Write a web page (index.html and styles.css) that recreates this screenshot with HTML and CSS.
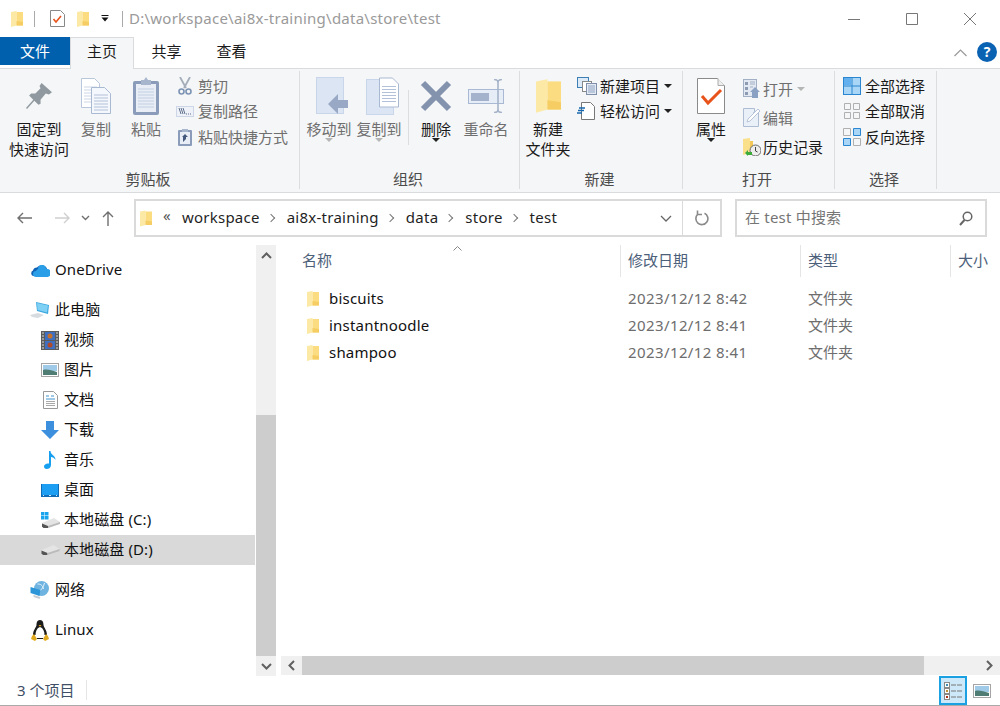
FILE: index.html
```html
<!DOCTYPE html>
<html lang="zh-CN">
<head>
    <meta charset="UTF-8">
    <title>test</title>
    <link rel="stylesheet" href="styles.css">
</head>
<body>
<svg class="defs" width="0" height="0">
    <symbol id="folder" viewBox="0 0 12 16">
        <path d="M0 1 5.500 0v14.500L0 16z" fill="#fde9a6"/>
        <path d="M5.500 1H12v13.500H5.500z" fill="#fbdc80"/>
        <path d="M5.500 10 12 11v3.500H5.500z" fill="#f6cd62"/>
    </symbol>
    <symbol id="docs" viewBox="0 0 30 36">
        <path d="M.5.500h13l5 5v24H.5z" fill="#fff" stroke="#b9c7dc"/>
        <path d="M3 9h13M3 12h13M3 15h13M3 18h8M3 21h8M3 24h8" stroke="#ccd6e6"/>
        <path d="M10.500 9.500h13l6 6v20h-19z" fill="#f4f7fb" stroke="#a9b9d2"/>
        <path d="M13 17h14M13 20h14M13 23h14M13 26h14M13 29h14M13 32h14" stroke="#b3c1d8"/>
    </symbol>
    <symbol id="doc-lines" viewBox="0 0 20 30">
        <path d="M.5.500h13l6 6v23H.5z" fill="#fff" stroke="#a9b9d2"/>
        <path d="M3 9h14M3 12h14M3 15h14M3 18h14M3 21h14M3 24h14" stroke="#b3c1d8"/>
    </symbol>
    <symbol id="drive" viewBox="0 0 18 10">
        <path d="M0 5 12 0l6 4-1 1.500-11 4.500H1z" fill="#e4e4e4"/>
        <path d="M0 5.500 6 8v2H1.500L0 8.500z" fill="#555"/>
        <path d="M6 8 18 4v2L6 10z" fill="#bbb"/>
    </symbol>
</svg>

<div class="window">
    <header class="titlebar">
        <svg class="qa-folder" width="12" height="16"><use href="#folder"/></svg>
        <span class="qa-sep"></span>
        <svg class="qa-check" width="15" height="17" viewBox="0 0 15 17">
            <path d="M.5.500h10l4 4v12H.5z" fill="#fff" stroke="#888"/>
            <path d="M3.500 9l2.500 3 5-6" fill="none" stroke="#e8531c" stroke-width="1.600"/>
        </svg>
        <svg class="qa-folder2" width="12" height="16"><use href="#folder"/></svg>
        <svg class="qa-drop" width="8" height="7" viewBox="0 0 8 7">
            <path d="M.5.500h7" stroke="#111"/>
            <path d="M.5 2.500h7L4 6.500z" fill="#111"/>
        </svg>
        <span class="qa-sep qa-sep-2"></span>
        <span class="title-text">D:\workspace\ai8x-training\data\store\test</span>
        <div class="win-btns">
            <svg width="12" height="12" viewBox="0 0 12 12"><path d="M0 6.500h12" stroke="#777"/></svg>
            <svg width="12" height="12" viewBox="0 0 12 12"><path d="M.5.500h11v11H.5z" fill="none" stroke="#777"/></svg>
            <svg width="12" height="12" viewBox="0 0 12 12"><path d="M0 0l12 12M12 0 0 12" stroke="#777"/></svg>
        </div>
    </header>

    <nav class="tabs">
        <span class="tab tab-file">文件</span>
        <span class="tab tab-on">主页</span>
        <span class="tab">共享</span>
        <span class="tab">查看</span>
        <svg class="tabs-chevron" width="13" height="8" viewBox="0 0 13 8"><path d="M.5 7 6.500 1l6 6" fill="none" stroke="#999" stroke-width="1.200"/></svg>
        <span class="help">?</span>
    </nav>

    <section class="ribbon">
        <div class="group group-clip">
            <div class="group-body">
                <div class="big w70">
                    <div class="big-icon">
                        <svg width="26" height="26" viewBox="0 0 25 25"><path d="M15 0 25 9l-3 2-3-1-5 6v4l-2 1-4-4-7 8-1-1 7-8-4-4 2-2h4l5-5-1-2z" fill="#8f999f"/></svg>
                    </div>
                    <span>固定到</span><span>快速访问</span>
                </div>
                <div class="big w44 off">
                    <div class="big-icon"><svg width="30" height="36"><use href="#docs"/></svg></div>
                    <span>复制</span>
                </div>
                <div class="big w44 off ml6">
                    <div class="big-icon">
                        <svg width="26" height="38" viewBox="0 0 26 38">
                            <rect x="0" y="4" width="26" height="34" rx="2" fill="#8b9cbb"/>
                            <rect x="3" y="7" width="20" height="28" fill="#e8edf6"/>
                            <path d="M5 12h16M5 15h16M5 18h16M5 21h16M5 24h16M5 27h16M5 30h16" stroke="#c3cfe2"/>
                            <path d="M8 3h3l2-3 2 3h3v5H8z" fill="#a7b5cd"/>
                        </svg>
                    </div>
                    <span>粘贴</span>
                </div>
                <div class="small-col ml8 off">
                    <div class="small"><span class="slot">
                        <svg class="nudge" width="14" height="18" viewBox="0 0 14 18">
                            <path d="M2 0l6 11M12 0 6 11" stroke="#a4aebb" stroke-width="1.800" fill="none"/>
                            <circle cx="3.500" cy="14.500" r="2.500" fill="none" stroke="#7d93b4" stroke-width="1.600"/>
                            <circle cx="10.500" cy="14.500" r="2.500" fill="none" stroke="#7d93b4" stroke-width="1.600"/>
                        </svg>
                    </span>剪切</div>
                    <div class="small"><span class="slot">
                        <svg width="18" height="11" viewBox="0 0 18 11">
                            <rect width="18" height="11" fill="#ccd6e6"/>
                            <rect x="1" y="1" width="16" height="9" fill="#eef2f8"/>
                            <path d="M3 2l2 6M5 2l2 6M7 2l2 6" stroke="#5f6f8c" fill="none"/>
                            <path d="M10 8h1M12 8h1M14 8h1" stroke="#5f6f8c"/>
                        </svg>
                    </span>复制路径</div>
                    <div class="small"><span class="slot">
                        <svg class="nudge" width="14" height="18" viewBox="0 0 14 18">
                            <rect y="2" width="14" height="16" rx="1" fill="#8b9cbb"/>
                            <rect x="2" y="4" width="10" height="12" fill="#e8edf6"/>
                            <path d="M4 1h6v3H4z" fill="#a7b5cd"/>
                            <path d="M5 14V9h-1l3-3 3 3H8v2z" fill="#44597c"/>
                        </svg>
                    </span>粘贴快捷方式</div>
                </div>
            </div>
            <div class="group-label">剪贴板</div>
        </div>

        <div class="group group-org">
            <div class="group-body">
                <div class="big w50 off">
                    <div class="big-icon big-icon-r">
                        <svg width="33" height="38" viewBox="0 0 33 38">
                            <rect x=".5" y=".5" width="27" height="36" fill="#dce5f3" stroke="#c9d6ea"/>
                            <path d="M12 27 22 17v6h10v8H22v6z" fill="#99a9c5"/>
                        </svg>
                    </div>
                    <span>移动到</span><i class="caret caret-off"></i>
                </div>
                <div class="big w50 off">
                    <div class="big-icon big-icon-r">
                        <svg width="33" height="38" viewBox="0 0 33 38">
                            <rect x=".5" y="2.500" width="27" height="35" fill="#dce5f3" stroke="#c9d6ea"/>
                            <use href="#doc-lines" x="13" y="0" width="20" height="31"/>
                        </svg>
                    </div>
                    <span>复制到</span><i class="caret caret-off"></i>
                </div>
                <span class="vsep"></span>
                <div class="big w50">
                    <div class="big-icon">
                        <svg width="32" height="32" viewBox="0 0 32 32"><path d="M3 3l26 26M29 3 3 29" stroke="#8493ad" stroke-width="6"/></svg>
                    </div>
                    <span>删除</span><i class="caret"></i>
                </div>
                <div class="big w50 off">
                    <div class="big-icon">
                        <svg width="36" height="34" viewBox="0 0 36 34">
                            <rect x=".5" y="10.500" width="35" height="14" fill="#e6edf7" stroke="#a9b8d3"/>
                            <rect x="3" y="14" width="18" height="8" fill="#a4b2cb"/>
                            <path d="M26 .5c3 0 4 1 4 3v27c0 2-1 3-4 3M34 .5c-3 0-4 1-4 3v27c0 2 1 3 4 3" fill="none" stroke="#a5b3c9" stroke-width="1.600"/>
                        </svg>
                    </div>
                    <span>重命名</span>
                </div>
            </div>
            <div class="group-label">组织</div>
        </div>

        <div class="group group-new">
            <div class="group-body">
                <div class="big w48">
                    <div class="big-icon"><svg width="25" height="34"><use href="#folder"/></svg></div>
                    <span>新建</span><span>文件夹</span>
                </div>
                <div class="small-col ml5">
                    <div class="small"><span class="slot slot-23">
                        <svg width="20" height="18" viewBox="0 0 20 18">
                            <rect x=".5" y=".5" width="11" height="10" fill="#dbeaf6" stroke="#3d7fb5"/>
                            <rect x="5.500" y="4.500" width="9" height="10" fill="#fff" stroke="#888"/>
                            <rect x="9.500" y="6.500" width="10" height="11" fill="#e4ebf5" stroke="#7f8fa9"/>
                            <path d="M11 9h7M11 11h7M11 13h7M11 15h7" stroke="#8fa3c2"/>
                        </svg>
                    </span>新建项目<i class="caret caret-side"></i></div>
                    <div class="small"><span class="slot slot-23">
                        <svg width="18" height="18" viewBox="0 0 18 18">
                            <path d="M4.500.500h9l4 4v13h-13z" fill="#fff" stroke="#777"/>
                            <path d="M2 6h6M1 8.500h6M0 11h5" stroke="#1668b0" stroke-width="1.300"/>
                        </svg>
                    </span>轻松访问<i class="caret caret-side"></i></div>
                </div>
            </div>
            <div class="group-label">新建</div>
        </div>

        <div class="group group-open">
            <div class="group-body">
                <div class="big w48">
                    <div class="big-icon">
                        <svg width="28" height="36" viewBox="0 0 28 36">
                            <path d="M.5.500h20l7 7v28H.5z" fill="#fff" stroke="#8a8a8a"/>
                            <path d="M21 .5v7h6.500" fill="#eee" stroke="#aaa"/>
                            <path d="M5 18l6 7L24 12" fill="none" stroke="#e8531c" stroke-width="3"/>
                        </svg>
                    </div>
                    <span>属性</span><i class="caret"></i>
                </div>
                <div class="small-col tall ml8">
                    <div class="small off"><span class="slot slot-20">
                        <svg width="17" height="19" viewBox="0 0 17 19">
                            <rect x=".5" y=".5" width="13" height="17" fill="#e3e9f2" stroke="#a2afc4"/>
                            <path d="M2 3h3v3H2zM2 8h3v3H2zM2 13h3v3H2z" fill="#8c9ab2"/>
                            <path d="M7 3h5M7 5h5M7 8h3" stroke="#a2afc4"/>
                            <path d="M7 13l5-5 5 5h-2v6H9v-6z" fill="#8aa1c4"/>
                        </svg>
                    </span>打开<i class="caret caret-off caret-side"></i></div>
                    <div class="small off"><span class="slot slot-20">
                        <svg width="17" height="19" viewBox="0 0 17 19">
                            <path d="M.5.500h11v3l-1 1 5 -3v17H.5z" fill="#eaf0f8" stroke="#aebdd4"/>
                            <path d="M4 14l1-3L15 1l2 2L7 13z" fill="#fff" stroke="#b6c3d8"/>
                        </svg>
                    </span>编辑</div>
                    <div class="small"><span class="slot slot-20">
                        <svg width="18" height="18" viewBox="0 0 18 18">
                            <path d="M0 1l7-1v15l-7 2z" fill="#fbe08b"/>
                            <path d="M7 3h3v12H7z" fill="#f4c95a"/>
                            <circle cx="12.500" cy="12.500" r="5.500" fill="#eee" stroke="#666"/>
                            <path d="M12.500 9v4l2 1" fill="none" stroke="#444"/>
                            <path d="M2 15l3-3v2h4v3H5v1z" fill="#3cab3a"/>
                        </svg>
                    </span>历史记录</div>
                </div>
            </div>
            <div class="group-label">打开</div>
        </div>

        <div class="group group-select">
            <div class="group-body">
                <div class="small-col">
                    <div class="small"><span class="slot">
                        <svg width="18" height="18" viewBox="0 0 18 18">
                            <rect x=".5" y=".5" width="17" height="17" fill="#a9d6f7" stroke="#2a86d0"/>
                            <path d="M9 0v18M0 9h18" stroke="#2a86d0"/>
                            <path d="M1 1h7v7H1z" fill="#62b1ee"/>
                        </svg>
                    </span>全部选择</div>
                    <div class="small"><span class="slot">
                        <svg class="nudge-r" width="16" height="16" viewBox="0 0 16 16">
                            <path d="M.5.500h6v6h-6zM9.500.500h6v6h-6zM.5 9.500h6v6h-6zM9.500 9.500h6v6h-6z" fill="none" stroke="#b0b0b0"/>
                        </svg>
                    </span>全部取消</div>
                    <div class="small"><span class="slot">
                        <svg width="18" height="18" viewBox="0 0 18 18">
                            <path d="M.5.500h7v7h-7zM10.500 10.500h7v7h-7z" fill="none" stroke="#b0b0b0"/>
                            <path d="M10.500.500h7v7h-7zM.5 10.500h7v7h-7z" fill="#a9d6f7" stroke="#2a86d0"/>
                        </svg>
                    </span>反向选择</div>
                </div>
            </div>
            <div class="group-label">选择</div>
        </div>
    </section>

    <section class="addressbar">
        <div class="nav-arrows">
            <svg width="15" height="12" viewBox="0 0 15 12"><path d="M15 6H1M6 1 1 6l5 5" fill="none" stroke="#6f6f6f" stroke-width="1.400"/></svg>
            <svg class="arrow-forward" width="15" height="12" viewBox="0 0 15 12"><path d="M0 6h14M9 1l5 5-5 5" fill="none" stroke="#cfcfcf" stroke-width="1.400"/></svg>
            <svg class="arrow-down" width="9" height="6" viewBox="0 0 9 6"><path d="M1 1l3.500 3.500L8 1" fill="none" stroke="#6f6f6f" stroke-width="1.400"/></svg>
            <svg class="arrow-up" width="12" height="15" viewBox="0 0 12 15"><path d="M6 15V1M1 6l5-5 5 5" fill="none" stroke="#6f6f6f" stroke-width="1.400"/></svg>
        </div>
        <div class="pathbox">
            <svg class="path-folder" width="12" height="17"><use href="#folder"/></svg>
            <span class="path-more">«</span>
            <span>workspace</span><i class="crumb"></i>
            <span>ai8x-training</span><i class="crumb"></i>
            <span>data</span><i class="crumb"></i>
            <span>store</span><i class="crumb"></i>
            <span>test</span>
            <svg class="path-drop" width="12" height="7" viewBox="0 0 12 7"><path d="M1 1l5 5 5-5" fill="none" stroke="#666" stroke-width="1.300"/></svg>
            <div class="path-refresh">
                <svg width="15" height="16" viewBox="0 0 15 16">
                    <path d="M10.500 3.200A6 6 0 1 1 4 4" fill="none" stroke="#8a8a8a" stroke-width="1.600"/>
                    <path d="M3.500.5v4H8" fill="none" stroke="#8a8a8a" stroke-width="1.600"/>
                </svg>
            </div>
        </div>
        <div class="searchbox">
            <span>在 test 中搜索</span>
            <svg width="14" height="15" viewBox="0 0 14 15"><circle cx="8.500" cy="5.500" r="4.300" fill="none" stroke="#666" stroke-width="1.500"/><path d="M5.500 9 1 14" stroke="#666" stroke-width="2"/></svg>
        </div>
    </section>

    <main class="main">
        <aside class="sidebar">
            <div class="tree">
                <div class="row">
                    <svg class="ico-top" width="20" height="14" viewBox="0 0 20 14">
                        <path d="M3 7.500a4 4 0 0 1 4-3 6 6 0 0 1 10 1L9 13H3a3 3 0 0 1 0-5.500z" fill="#0f62b5"/>
                        <path d="M8 6a4 4 0 0 1 8 0 4 4 0 0 1 1.500 8H6a3 3 0 0 1 0-6 4 4 0 0 1 2-2z" fill="#2a9fe8"/>
                    </svg>
                    OneDrive
                </div>
                <div class="row tree-gap">
                    <svg class="ico-top" width="20" height="17" viewBox="0 0 20 17">
                        <path d="M6 0l13 3-1 9-11-3z" fill="#3aa6de"/>
                        <path d="M7 1l11 2.500-1 7L7.500 8z" fill="#7ed0f5"/>
                        <path d="M0 13l8-2 6 2-6 3-6-1z" fill="#d7dce0"/>
                    </svg>
                    此电脑
                </div>
                <div class="row child">
                    <svg class="ico-child" width="18" height="19" viewBox="0 0 18 19">
                        <rect width="18" height="19" fill="#5b5b5b"/>
                        <rect x="4" y="1" width="10" height="8" fill="#3f6fc0"/>
                        <rect x="4" y="10" width="10" height="8" fill="#3f6fc0"/>
                        <circle cx="9" cy="5" r="2.500" fill="#c8702a"/>
                        <circle cx="9" cy="14" r="2.500" fill="#b0492a"/>
                        <path d="M1 2h2M1 5h2M1 8h2M1 11h2M1 14h2M1 17h2M15 2h2M15 5h2M15 8h2M15 11h2M15 14h2M15 17h2" stroke="#ddd"/>
                    </svg>
                    视频
                </div>
                <div class="row child">
                    <svg class="ico-child" width="18" height="14" viewBox="0 0 18 14">
                        <rect x=".5" y=".5" width="17" height="13" fill="#fff" stroke="#a5a5a5"/>
                        <rect x="2" y="2" width="14" height="6" fill="#9fcbe8"/>
                        <path d="M2 7c4-1 8 0 14 2v3H2z" fill="#4f7d74"/>
                    </svg>
                    图片
                </div>
                <div class="row child">
                    <svg class="ico-child ico-doc" width="15" height="18" viewBox="0 0 15 18">
                        <path d="M.5.500h10l4 4v13H.5z" fill="#fff" stroke="#999"/>
                        <path d="M3 5h3M8 5h3M3 8h9" stroke="#3f93cf"/>
                        <path d="M3 10.500h9M3 12.500h9M3 14.500h9" stroke="#aaa"/>
                    </svg>
                    文档
                </div>
                <div class="row child">
                    <svg class="ico-child" width="18" height="18" viewBox="0 0 18 18"><path d="M5 0h8v9h5l-9 9-9-9h5z" fill="#3b8fdd"/></svg>
                    下载
                </div>
                <div class="row child">
                    <svg class="ico-child ico-note" width="12" height="18" viewBox="0 0 12 18"><path d="M5 0h1.500c0 4 5 4 5 9-1-2-3-3-4.500-3v8c0 2.500-2 4-4.500 4C1 18 0 17 0 15.500 0 13.500 2.500 12 5 12.600z" fill="#18a0f0"/></svg>
                    音乐
                </div>
                <div class="row child">
                    <svg class="ico-child" width="18" height="13" viewBox="0 0 18 13">
                        <rect width="18" height="13" fill="#0f6cb5"/>
                        <rect x="1" y="0" width="16" height="11" fill="#1c9ff2"/>
                        <path d="M2 11.500h1M8 11.500h2M15 11.500h1" stroke="#cfeaff"/>
                    </svg>
                    桌面
                </div>
                <div class="row child">
                    <svg class="ico-child ico-drive" width="19" height="16" viewBox="0 0 19 16">
                        <use href="#drive" x="1" y="6" width="18" height="10"/>
                        <path d="M0 0h3.500v3.500H0zM4 0h3.500v3.500H4zM0 4h3.500v3.500H0zM4 4h3.500v3.500H4z" fill="#19a5ee"/>
                    </svg>
                    本地磁盘 (C:)
                </div>
                <div class="row child row-on">
                    <svg class="ico-child ico-drive" width="19" height="10"><use href="#drive"/></svg>
                    本地磁盘 (D:)
                </div>
                <div class="row tree-gap">
                    <svg class="ico-top" width="19" height="18" viewBox="0 0 19 18">
                        <circle cx="11" cy="7.500" r="7.500" fill="#6fb4e0"/>
                        <path d="M7 3c3 0 5 1 6 5M14 2c-1 4-3 7-7 10" stroke="#e6f3fb" fill="none"/>
                        <path d="M0 6l10 3-1 6-9-3z" fill="#2d96d8"/>
                        <path d="M3 14l7 2-1 2-6-2z" fill="#c8cdd2"/>
                    </svg>
                    网络
                </div>
                <div class="row tree-gap">
                    <svg class="ico-top" width="18" height="21" viewBox="0 0 18 21">
                        <path d="M9 0c3 0 3.500 3 3.500 5 0 2 3.500 5 3.500 10H2C2 10 5.500 7 5.500 5 5.500 3 6 0 9 0z" fill="#1c1c1c"/>
                        <path d="M9 7c3 1 4.500 4 4.500 8h-9C4.500 11 6 8 9 7z" fill="#fff"/>
                        <path d="M7.500 5h3l-1.500 1.800z" fill="#e0a81c"/>
                        <path d="M3 14l3 5-2 2-4-2 1-3zM15 14l-3 5 2 2 4-2-1-3z" fill="#e0a81c"/>
                        <path d="M6 18h6v1H6z" fill="#1c1c1c"/>
                    </svg>
                    Linux
                </div>
            </div>
            <div class="vscroll">
                <span class="sb-btn"><svg width="11" height="7" viewBox="0 0 11 7"><path d="M1 6l4.500-4.500L10 6" fill="none" stroke="#606060" stroke-width="2"/></svg></span>
                <span class="vtrack"></span>
                <span class="vthumb"></span>
                <span class="sb-btn"><svg width="11" height="7" viewBox="0 0 11 7"><path d="M1 1l4.500 4.500L10 1" fill="none" stroke="#606060" stroke-width="2"/></svg></span>
            </div>
        </aside>

        <div class="content">
            <div class="list">
                <div class="list-head">
                    <span class="col col-name">名称
                        <svg class="sort" width="9" height="5" viewBox="0 0 9 5"><path d="M.5 4.500l4-4 4 4" fill="none" stroke="#888"/></svg>
                    </span>
                    <span class="col">修改日期</span>
                    <span class="col">类型</span>
                    <span class="col">大小</span>
                </div>
                <div class="file">
                    <span class="file-name"><svg width="12" height="16"><use href="#folder"/></svg>biscuits</span>
                    <span class="meta date">2023/12/12 8:42</span>
                    <span class="meta">文件夹</span>
                </div>
                <div class="file">
                    <span class="file-name"><svg width="12" height="16"><use href="#folder"/></svg>instantnoodle</span>
                    <span class="meta date">2023/12/12 8:41</span>
                    <span class="meta">文件夹</span>
                </div>
                <div class="file">
                    <span class="file-name"><svg width="12" height="16"><use href="#folder"/></svg>shampoo</span>
                    <span class="meta date">2023/12/12 8:41</span>
                    <span class="meta">文件夹</span>
                </div>
            </div>
            <div class="hscroll">
                <span class="sb-btn-h"><svg width="7" height="11" viewBox="0 0 7 11"><path d="M6 1 1.500 5.500 6 10" fill="none" stroke="#606060" stroke-width="2"/></svg></span>
                <span class="hthumb"></span>
                <span class="htrack"></span>
                <span class="sb-btn-h"><svg width="7" height="11" viewBox="0 0 7 11"><path d="M1 1l4.500 4.500L1 10" fill="none" stroke="#606060" stroke-width="2"/></svg></span>
            </div>
        </div>
    </main>

    <footer class="status">
        <span class="status-text">3 个项目</span>
        <div class="view-btns">
            <span class="view-btn view-on">
                <svg width="18" height="18" viewBox="0 0 18 18">
                    <rect x=".5" y=".5" width="5" height="5" fill="#fff" stroke="#888"/>
                    <rect x=".5" y="6.500" width="5" height="5" fill="#fff" stroke="#888"/>
                    <rect x=".5" y="12.500" width="5" height="5" fill="#fff" stroke="#888"/>
                    <path d="M2 2h2v2H2z" fill="#3f8fb0"/><path d="M2 8h2v2H2z" fill="#c09030"/><path d="M2 14h2v2H2z" fill="#b03020"/>
                    <path d="M7 3h5M13 3h5M7 9h5M13 9h5M7 15h5M13 15h5" stroke="#777"/>
                </svg>
            </span>
            <span class="view-btn">
                <svg width="18" height="14" viewBox="0 0 18 14">
                    <rect x=".5" y=".5" width="17" height="13" fill="#fff" stroke="#a5a5a5"/>
                    <rect x="2" y="2" width="14" height="6" fill="#9fcbe8"/>
                    <path d="M2 7c4-1 8 0 14 2v3H2z" fill="#4f7d74"/>
                </svg>
            </span>
        </div>
    </footer>
</div>
</body>
</html>
```

FILE: styles.css
```css
* {
    box-sizing: border-box;
}

html, body {
    margin: 0;
    padding: 0;
    background: #fff;
}

body {
    font-family: "Noto Sans", "Noto Sans CJK SC", sans-serif;
    font-size: 15px;
    line-height: 20px;
    color: #1a1a1a;
    overflow: hidden;
}

svg {
    display: block;
    flex: none;
}

.defs {
    position: absolute;
}

.window {
    width: 1000px;
    height: 706px;
    display: flex;
    flex-direction: column;
    border-bottom: 1px solid #aaa;
    overflow: hidden;
}

/* title bar */
.titlebar {
    height: 37px;
    flex: none;
    display: flex;
    align-items: center;
    padding-left: 11px;
}

.qa-sep {
    width: 1px;
    height: 16px;
    background: #aaa;
    margin-left: 11px;
}

.qa-sep-2 {
    margin-left: 13px;
}

.qa-check {
    margin-left: 15px;
}

.qa-folder2 {
    margin-left: 12px;
}

.qa-drop {
    margin-left: 12px;
}

.title-text {
    margin: -2px 0 0 6px;
    letter-spacing: .25px;
    color: #9a9a9a;
}

.win-btns {
    margin-left: auto;
    display: flex;
    gap: 46px;
    padding-right: 24px;
}

/* tabs */
.tabs {
    height: 31px;
    flex: none;
    display: flex;
    align-items: flex-start;
}

.tab {
    width: 65px;
    height: 31px;
    line-height: 28px;
    text-align: center;
}

.tab-file {
    width: 70px;
    height: 28px;
    background: #0060ae;
    color: #fff;
}

.tab-on {
    width: 64px;
    height: 32px;
    line-height: 27px;
    background: #f5f6f7;
    border: 1px solid #dadbdc;
    border-bottom: none;
    position: relative;
    z-index: 1;
}

.tabs-chevron {
    margin: 12px 0 0 auto;
}

.help {
    width: 20px;
    height: 20px;
    margin: 5px 3px 0 10px;
    border-radius: 50%;
    background: #0a62b3;
    color: #fff;
    font-weight: 700;
    font-size: 14px;
    line-height: 20px;
    text-align: center;
}

/* ribbon */
.ribbon {
    height: 125px;
    flex: none;
    display: flex;
    background: #f5f6f7;
    border-top: 1px solid #dadbdc;
    border-bottom: 1px solid #dadbdc;
    padding: 2px 0 3px;
}

.group {
    display: flex;
    flex-direction: column;
    border-right: 1px solid #dcdddf;
    padding-top: 3px;
}

.group-clip { width: 300px; }
.group-org { width: 220px; }
.group-new { width: 163px; }
.group-open { width: 152px; }
.group-select { width: 102px; }

.group-body {
    flex: 1;
    display: flex;
    align-items: flex-start;
    padding-left: 4px;
}

.group-select .group-body {
    padding-left: 8px;
}

.group-label {
    height: 20px;
    padding-right: 3px;
    text-align: center;
    color: #4b4b4b;
}

.big {
    display: flex;
    flex-direction: column;
    align-items: center;
    white-space: nowrap;
}

.big-icon {
    height: 45px;
    display: flex;
    align-items: center;
    justify-content: center;
    padding-bottom: 2px;
}

.big-icon-r {
    padding-left: 6px;
}

.w70 { width: 70px; }
.w50 { width: 50px; }
.w48 { width: 48px; }
.w44 { width: 44px; }
.ml5 { margin-left: 5px; }
.ml6 { margin-left: 6px; }
.ml8 { margin-left: 8px; }

.off {
    color: #6f6f6f;
}

.vsep {
    width: 1px;
    height: 55px;
    margin: 16px 2px 0 4px;
    background: #dcdddf;
}

.small-col {
    display: flex;
    flex-direction: column;
    margin-top: -1px;
}

.small {
    height: 25.5px;
    display: flex;
    align-items: center;
    white-space: nowrap;
}

.tall {
    margin-top: 0;
}

.tall .small {
    height: 29px;
}

.slot {
    width: 22px;
    flex: none;
}

.slot-23 { width: 23px; }
.slot-20 { width: 20px; }

.nudge {
    margin-left: 2px;
}

.nudge-r {
    margin-left: 1px;
}

.caret {
    display: block;
    width: 0;
    height: 0;
    margin-top: -1px;
    border: 4px solid transparent;
    border-bottom: none;
    border-top-color: #222;
}

.caret-off {
    border-top-color: #b5b5b5;
}

.caret-side {
    margin: 0 0 0 4px;
}

/* address row */
.addressbar {
    height: 52px;
    flex: none;
    display: flex;
    padding-top: 6px;
}

.nav-arrows {
    width: 134px;
    height: 38px;
    flex: none;
    display: flex;
    align-items: center;
    padding-left: 17px;
}

.arrow-forward { margin-left: 23px; }
.arrow-down { margin-left: 11px; }
.arrow-up { margin-left: 12px; }

.pathbox {
    width: 588px;
    height: 38px;
    flex: none;
    display: flex;
    align-items: center;
    gap: 11px;
    border: 2px solid #dadada;
    padding-left: 4px;
    color: #1f1f1f;
    letter-spacing: .25px;
}

.pathbox > span {
    margin-top: -2px;
}

.path-more {
    color: #555;
    line-height: 14px;
    padding-bottom: 4px;
}

.crumb {
    width: 6px;
    height: 6px;
    margin-left: -3px;
    margin-right: 2px;
    border-top: 1px solid #777;
    border-right: 1px solid #777;
    transform: rotate(45deg);
}

.path-drop {
    margin-left: auto;
}

.path-refresh {
    width: 38px;
    height: 100%;
    display: flex;
    align-items: center;
    justify-content: center;
    margin-left: -1px;
    border-left: 1px solid #dadada;
}

.searchbox {
    width: 252px;
    height: 38px;
    margin-left: 13px;
    flex: none;
    display: flex;
    align-items: center;
    justify-content: space-between;
    border: 2px solid #dadada;
    padding: 0 12px 0 8px;
    color: #757575;
    letter-spacing: .2px;
}

.searchbox span {
    margin-top: -2px;
}

/* main area */
.main {
    flex: 1;
    min-height: 0;
    display: flex;
}

.sidebar {
    width: 281px;
    flex: none;
    display: flex;
}

.tree {
    width: 256px;
    flex: none;
    padding-top: 10px;
}

.row {
    width: 255px;
    height: 30px;
    display: flex;
    align-items: center;
    padding: 0 0 3px 30px;
    color: #111;
    letter-spacing: .1px;
    white-space: nowrap;
}

.row svg {
    margin-top: 3px;
}

.tree-gap {
    margin-top: 10px;
}

.child {
    padding-left: 41px;
}

.row-on {
    background: #d9d9d9;
}

.ico-top {
    width: 25px;
    padding-right: 5px;
}

.ico-child {
    margin-right: 5px;
}

.ico-drive {
    margin-right: 4px;
}

.ico-doc {
    margin-left: 2px;
    margin-right: 6px;
}

.ico-note {
    margin-left: 3px;
    margin-right: 8px;
}

.vscroll {
    width: 20px;
    height: 431px;
    flex: none;
    display: flex;
    flex-direction: column;
    background: #f0f0f0;
}

.sb-btn {
    height: 20px;
    flex: none;
    display: flex;
    align-items: center;
    justify-content: center;
}

.vtrack {
    height: 150px;
    flex: none;
}

.vthumb {
    flex: 1;
    background: #cdcdcd;
}

.content {
    flex: 1;
    min-width: 0;
    display: flex;
    flex-direction: column;
}

.list {
    flex: 1;
    min-height: 0;
    overflow: hidden;
}

.list-head {
    display: grid;
    grid-template-columns: 339px 180px 150px 60px;
    height: 32px;
    margin-bottom: 7px;
    color: #4c607a;
}

.col {
    display: block;
    padding: 5px 0 0 7px;
    border-left: 1px solid #e5e5e5;
    white-space: nowrap;
}

.col-name {
    padding-left: 21px;
    border-left: none;
    position: relative;
}

.sort {
    position: absolute;
    left: 172px;
    top: 1px;
}

.file {
    display: grid;
    grid-template-columns: 339px 180px 150px;
    height: 27px;
    align-items: center;
}

.file-name {
    display: flex;
    align-items: center;
    gap: 10px;
    padding-left: 26px;
    color: #111;
    letter-spacing: .2px;
}

.file-name svg {
    margin-top: 3px;
}

.meta {
    padding-left: 8px;
    color: #6d6d6d;
}

.date {
    letter-spacing: .4px;
}

.hscroll {
    height: 19px;
    flex: none;
    display: flex;
    background: #f0f0f0;
}

.sb-btn-h {
    width: 21px;
    flex: none;
    display: flex;
    align-items: center;
    justify-content: center;
}

.hthumb {
    width: 622px;
    flex: none;
    background: #cdcdcd;
}

.htrack {
    flex: 1;
}

/* status bar */
.status {
    height: 29px;
    flex: none;
    margin-top: 1px;
    display: flex;
    align-items: center;
    padding-left: 17px;
    color: #3f4f66;
}

.status-text {
    margin-top: -2px;
    padding-right: 12px;
    border-right: 1px solid #e6e6e6;
}

.view-btns {
    margin-left: auto;
    display: flex;
    height: 100%;
    padding-right: 9px;
}

.view-btn {
    width: 24px;
    display: flex;
    align-items: center;
    justify-content: flex-end;
}

.view-on {
    width: 28px;
    justify-content: center;
    background: #cde8f8;
    border: 1px solid #1ba1e2;
    outline: 1px solid #1ba1e2;
    outline-offset: -2px;
}
```
